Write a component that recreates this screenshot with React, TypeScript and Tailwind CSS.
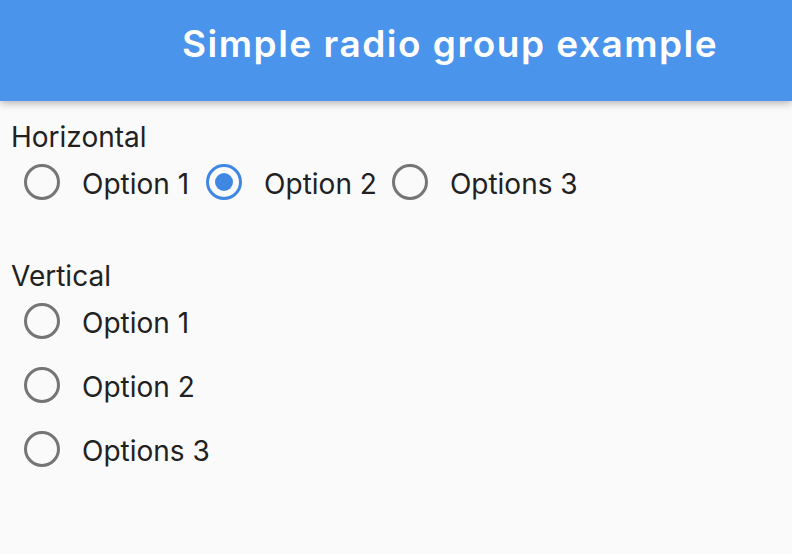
import React from "react";

function Radio({ selected }: { selected?: boolean }) {
  return selected ? (
    <span className="flex h-[36px] w-[36px] shrink-0 items-center justify-center rounded-full border-[3.5px] border-[#3f87e3]">
      <span className="h-[18px] w-[18px] rounded-full bg-[#3f87e3]" />
    </span>
  ) : (
    <span className="block h-[36px] w-[36px] shrink-0 rounded-full border-[3.5px] border-[#757575]" />
  );
}

function Item({ label, selected }: { label: string; selected?: boolean }) {
  return (
    <div className="flex h-[36px] items-center">
      <Radio selected={selected} />
      <span className="ml-[22px] pt-[4px] text-[28px] leading-[34px] text-[#212121]">{label}</span>
    </div>
  );
}

export default function App() {
  return (
    <div
      className="h-[554px] w-[792px] overflow-hidden bg-[#fafafa]"
      style={{ fontFamily: "Inter, Roboto, 'Liberation Sans', sans-serif" }}
    >
      <header className="relative z-10 flex h-[101px] items-center bg-[#4a94ec] pb-[14px] pl-[182px] shadow-[0_2px_8px_rgba(0,0,0,0.3)]">
        <h1 className="text-[37px] font-semibold leading-none tracking-[1.5px] text-white">Simple radio group example</h1>
      </header>
      <main className="pl-[11px] pt-[19px]">
        <div className="text-[28px] leading-[34px] text-[#212121]">Horizontal</div>
        <div className="mt-[10px] flex items-center pl-[13px]">
          <Item label="Option 1" />
          <div className="ml-[17px]">
            <Item label="Option 2" selected />
          </div>
          <div className="ml-[15px]">
            <Item label="Options 3" />
          </div>
        </div>
        <div className="mt-[59px] text-[28px] leading-[34px] text-[#212121]">Vertical</div>
        <div className="mt-[10px] flex flex-col gap-[28px] pl-[13px]">
          <Item label="Option 1" />
          <Item label="Option 2" />
          <Item label="Options 3" />
        </div>
      </main>
    </div>
  );
}
